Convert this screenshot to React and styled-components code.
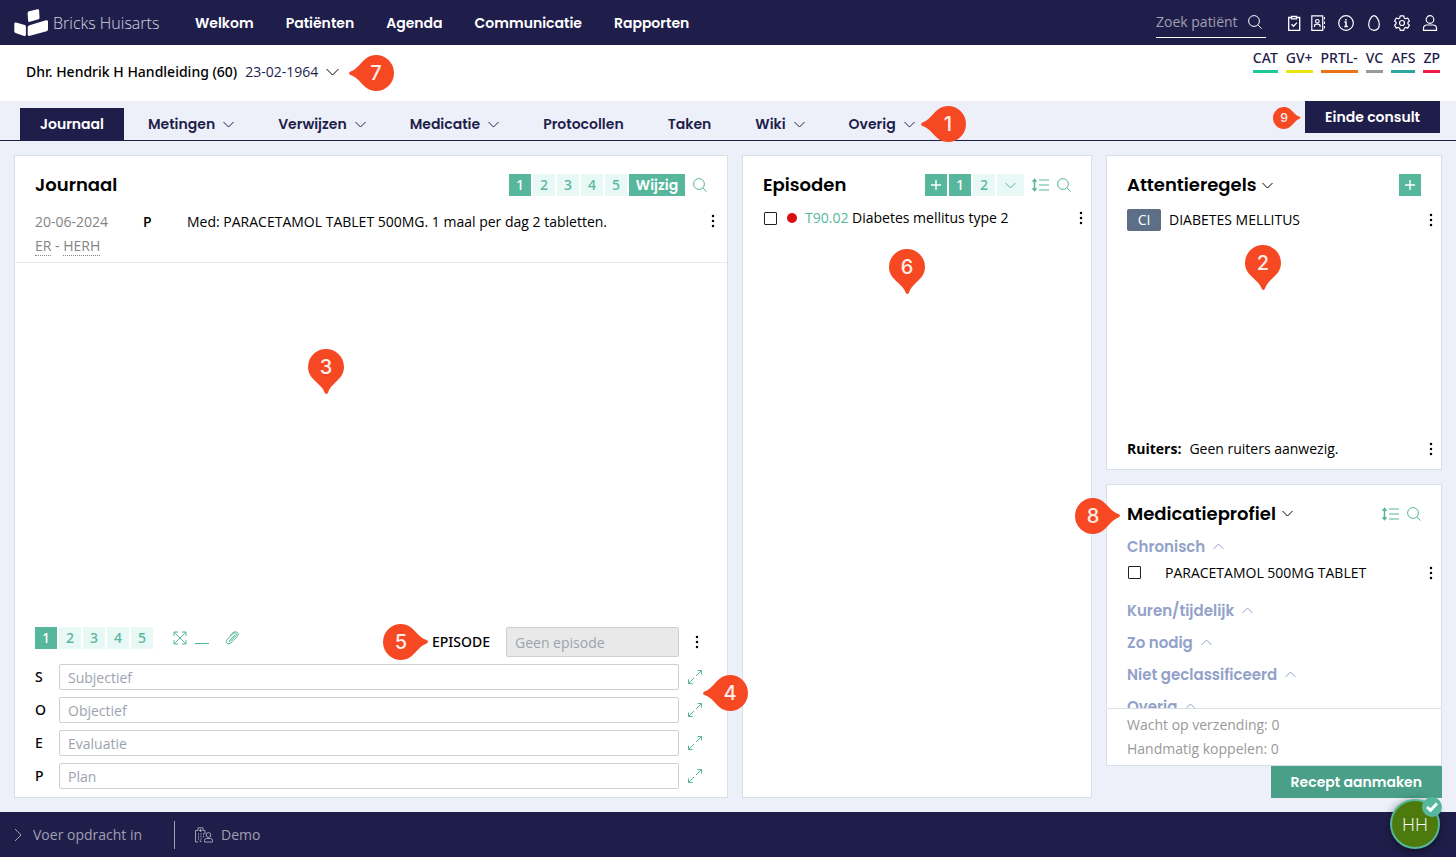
import React from 'react'
import styled, { createGlobalStyle } from 'styled-components'

const tabs = [
    { label: 'Metingen', menu: true },
    { label: 'Verwijzen', menu: true },
    { label: 'Medicatie', menu: true },
    { label: 'Protocollen' },
    { label: 'Taken' },
    { label: 'Wiki', menu: true },
    { label: 'Overig', menu: true, marker: '1' },
]

const labels = [
    { name: 'CAT', color: '#1bc998' },
    { name: 'GV+', color: '#ebe50f' },
    { name: 'PRTL-', color: '#ea7317' },
    { name: 'VC', color: '#999999' },
    { name: 'AFS', color: '#2fa5a0' },
    { name: 'ZP', color: '#ee1c47' },
]

const soep = [
    { key: 'S', name: 'Subjectief' },
    { key: 'O', name: 'Objectief' },
    { key: 'E', name: 'Evaluatie' },
    { key: 'P', name: 'Plan' },
]

/* Icons */
const Icon = ({ w = 16, h = 16, sw = 1, children }) => (
    <Svg width={w} height={h} viewBox={`0 0 ${w} ${h}`} strokeWidth={sw} aria-hidden="true">
        {children}
    </Svg>
)

const Chevron = ({ up }) => (
    <Icon w={11} h={7}>
        <path d={up ? 'M.5 6 5.5 1l5 5' : 'M.5 1l5 5 5-5'} />
    </Icon>
)

const SearchIcon = () => (
    <Icon w={14} h={14}>
        <circle cx="6" cy="6" r="5.4" />
        <path d="M10 10l3.6 3.6" />
    </Icon>
)

const SortIcon = () => (
    <Icon w={17} h={14}>
        <path d="M2.500 1.500v11M.5 3.800l2-2.300 2 2.300M.5 10.200l2 2.300 2-2.300" strokeWidth="1.500" />
        <path d="M7 2h10M7 7h10M7 12h10" strokeWidth="1.200" />
    </Icon>
)

const PlusIcon = () => (
    <Icon w={12} h={12} sw={1.4}>
        <path d="M6 1v10M1 6h10" />
    </Icon>
)

const DotsIcon = () => (
    <Icon w={4} h={14}>
        <g fill="#000" stroke="none">
            <circle cx="2" cy="2" r="1.25" />
            <circle cx="2" cy="7" r="1.25" />
            <circle cx="2" cy="12" r="1.25" />
        </g>
    </Icon>
)

const ExpandIcon = () => (
    <Icon w={14} h={14}>
        <path d="M9.5.5h4v4M13.5.5 8 6M4.5 13.5h-4v-4M.5 13.5 6 8" />
    </Icon>
)

const Logo = () => (
    <svg width="35" height="28" viewBox="0 0 35 28" fill="#fff" aria-hidden="true">
        <path d="M15 2.200 23.500.2q1.500-.3 1.600 1l.4 7.500q0 1.200-1 1.600L16 12.800q-1.700.5-1.900-1.100l-.5-7.600q0-1.500 1.400-1.900z" />
        <path d="M2 13.600l8.700 2.300q1.200.4 1.200 1.600v8q0 1.900-1.800 1.400l-8.600-2.800Q.3 23.600.3 22.300v-7.400q0-1.700 1.700-1.300z" />
        <path d="M15.500 16.200l16.500-4.900q1.800-.5 2 1.200v7.800q0 1.500-1.400 1.900l-16.700 4.600q-2.100.5-2.200-1.300v-7.200q.1-1.600 1.800-2.100z" />
    </svg>
)

/* Numbered pin, `point` is the side the tip is on */
const turns = { down: 0, left: 90, right: -90 }

const Pin = ({ n, point, size = 36 }) => (
    <svg width={size} height={size} viewBox="0 0 36 36" overflow="visible" aria-hidden="true">
        <path
            d="M18 0a18 18 0 0 1 18 18c0 7-4 11-8.500 15.200-3.500 3.300-6 6-7.500 10.300q-1.500 3-3.400 0c-1.500-4.300-4.600-7-8.100-10.300C4 29 0 25 0 18A18 18 0 0 1 18 0z"
            fill="#f54823"
            transform={`rotate(${turns[point]} 18 18)`}
        />
        <text x="18" y="25" textAnchor="middle" fontSize="20" fontWeight="500" fill="#fdeeea">{n}</text>
    </svg>
)

const Pager = ({ count }) => (
    <>
        {Array.from({ length: count }, (_, i) => (
            <PageBtn key={i} $active={i === 0}>{i + 1}</PageBtn>
        ))}
    </>
)

const TopBar = () => (
    <Header>
        <Brand href="#"><Logo />Bricks Huisarts</Brand>
        <MainNav>
            {['Welkom', 'Patiënten', 'Agenda', 'Communicatie', 'Rapporten'].map((item) => (
                <NavLink href="#" key={item}>{item}</NavLink>
            ))}
        </MainNav>
        <Search>
            <SearchInput placeholder="Zoek patiënt" aria-label="Zoek patiënt" />
            <SearchIcon />
        </Search>
        <Tools>
            <ToolPair>
                <IconBtn aria-label="Taken">
                    <Icon w={14} sw={1.3}>
                        <path d="M4 2.500H1.700v12.800h11V2.500H10M4.500 1.500h5v2.400h-5zM4.500 9.300l2 2L10 7.600" />
                    </Icon>
                </IconBtn>
                <IconBtn aria-label="Contacten">
                    <Icon w={14} sw={1.2}>
                        <path d="M.8.800h10.900v14.500H.8zM13.500 2v2.500M13.500 6.500V9M13.500 11v2.500M3.500 12v-1q0-1.800 2.800-1.800T9.100 11v1" />
                        <circle cx="6.300" cy="6.300" r="1.800" />
                    </Icon>
                </IconBtn>
            </ToolPair>
            <IconBtn aria-label="Informatie">
                <Icon sw={1.2}>
                    <circle cx="8" cy="8" r="7.300" />
                    <path d="M6.500 7H8v4.500M6.300 11.500h3.600M7.900 4v1.400" strokeWidth="1.500" />
                </Icon>
            </IconBtn>
            <IconBtn aria-label="Lab">
                <Icon sw={1.2}>
                    <path d="M8 .7c2.600 0 5.300 5 5.300 8.800 0 3.500-2 5.800-5.300 5.800s-5.300-2.300-5.300-5.800C2.700 5.700 5.400.7 8 .7z" />
                </Icon>
            </IconBtn>
            <IconBtn aria-label="Instellingen">
                <Icon sw={1.2}>
                    <path d="M6.200.8h3.600l.5 2.100 1.300.8 2.100-.7 1.700 3-1.500 1.400v1.300l1.500 1.400-1.700 3-2.100-.7-1.300.8-.5 2.100H6.200l-.5-2.100-1.300-.8-2.100.7-1.700-3 1.500-1.400V7.400L.6 6l1.700-3 2.100.7 1.300-.8z" strokeLinejoin="round" />
                    <circle cx="8" cy="8" r="2.500" />
                </Icon>
            </IconBtn>
            <IconBtn aria-label="Account">
                <Icon sw={1.2}>
                    <circle cx="8" cy="4.500" r="3.800" />
                    <path d="M1.500 15.300v-2q0-3.300 3.500-3.300h6q3.500 0 3.500 3.300v2z" />
                </Icon>
            </IconBtn>
        </Tools>
    </Header>
)

const PatientBar = () => (
    <Patient>
        <PatientBtn>
            <PatientName>Dhr. Hendrik H Handleiding (60)</PatientName>
            23-02-1964
            <Icon w={13} h={8}><path d="M.5 1l6 6 6-6" stroke="#000" /></Icon>
            <Marker $left="calc(100% + 19px)" $top="-5px"><Pin n="7" point="left" /></Marker>
        </PatientBtn>
        <Labels>
            {labels.map((l) => <Label key={l.name} $color={l.color}>{l.name}</Label>)}
        </Labels>
    </Patient>
)

const TabBar = () => (
    <Tabs>
        <Tab href="#" $active>Journaal</Tab>
        {tabs.map((t) => (
            <Tab href="#" key={t.label}>
                {t.label}
                {t.menu && <Chevron />}
                {t.marker && <Marker $left="calc(100% - 5px)" $top="-2px"><Pin n={t.marker} point="left" /></Marker>}
            </Tab>
        ))}
        <EndBtn>
            Einde consult
            <Marker $left="-32px" $top="6px"><Pin n="9" point="right" size={22} /></Marker>
        </EndBtn>
    </Tabs>
)

const Journaal = () => (
    <Panel>
        <PanelHead>
            <Title>Journaal</Title>
            <Group>
                <Pager count={5} />
                <EditBtn>Wijzig</EditBtn>
            </Group>
            <IconBtn aria-label="Zoeken" $green><SearchIcon /></IconBtn>
        </PanelHead>
        <Entry>
            <EntryMeta>
                20-06-2024<br />
                <Abbr>ER</Abbr> - <Abbr>HERH</Abbr>
            </EntryMeta>
            <EntryType>P</EntryType>
            <EntryText>Med: PARACETAMOL TABLET 500MG. 1 maal per dag 2 tabletten.</EntryText>
            <IconBtn aria-label="Meer"><DotsIcon /></IconBtn>
        </Entry>
        <Filler />
        <Composer>
            <ComposerHead>
                <Group><Pager count={5} /></Group>
                <ComposerTools>
                    <IconBtn aria-label="Vergroten" $green>
                        <Icon w={14} h={14}>
                            <path d="M1 5V1h4M9 1h4v4M13 9v4H9M5 13H1V9M1 1l12 12M13 1 1 13" />
                        </Icon>
                    </IconBtn>
                    <IconBtn aria-label="Verkleinen" $green>
                        <Icon w={14} h={14}><path d="M0 12.500h14" /></Icon>
                    </IconBtn>
                </ComposerTools>
                <IconBtn aria-label="Bijlage" $green>
                    <Icon w={14} h={14}>
                        <path d="M9.800 4.200 4.500 9.500q-.6 1.300.6 1.100l5.700-5.700q1.300-1.700 0-2.700-1.200-1-2.700.3L2.200 8.400q-1.800 2.200-.3 3.900 1.800 1.500 3.900-.3l6.300-6.300q2-2.600.2-4.300-2-1.600-4.400.3L5 4.500" />
                    </Icon>
                </IconBtn>
                <EpisodeLabel htmlFor="episode">
                    EPISODE
                    <Marker $left="-49px" $top="-6px"><Pin n="5" point="right" /></Marker>
                </EpisodeLabel>
                <EpisodeInput id="episode" placeholder="Geen episode" disabled />
                <IconBtn aria-label="Meer"><DotsIcon /></IconBtn>
            </ComposerHead>
            {soep.map((s) => (
                <SoepRow key={s.key}>
                    <SoepLabel htmlFor={`soep-${s.key}`}>{s.key}</SoepLabel>
                    <Input id={`soep-${s.key}`} placeholder={s.name} />
                    <IconBtn aria-label={`${s.name} vergroten`} $green><ExpandIcon /></IconBtn>
                </SoepRow>
            ))}
            <Marker $left="calc(100% - 15px)" $top="48px"><Pin n="4" point="left" /></Marker>
        </Composer>
        <Marker $left="293px" $top="193px"><Pin n="3" point="down" /></Marker>
    </Panel>
)

const Episoden = () => (
    <Panel>
        <PanelHead>
            <Title>Episoden</Title>
            <Group>
                <PageBtn $active aria-label="Toevoegen"><PlusIcon /></PageBtn>
                <Pager count={2} />
                <MoreBtn aria-label="Meer pagina's"><Chevron /></MoreBtn>
            </Group>
            <IconBtn aria-label="Sorteren" $green><SortIcon /></IconBtn>
            <IconBtn aria-label="Zoeken" $green><SearchIcon /></IconBtn>
        </PanelHead>
        <Episode>
            <Check type="checkbox" aria-label="Diabetes mellitus type 2" />
            <Dot />
            <EpisodeText><Code>T90.02</Code> Diabetes mellitus type 2</EpisodeText>
            <IconBtn aria-label="Meer"><DotsIcon /></IconBtn>
        </Episode>
        <Marker $left="146px" $top="93px"><Pin n="6" point="down" /></Marker>
    </Panel>
)

const Attentie = () => (
    <Panel $grow={19}>
        <PanelHead>
            <Title>Attentieregels <Chevron /></Title>
            <PageBtn $active aria-label="Toevoegen"><PlusIcon /></PageBtn>
        </PanelHead>
        <Alert>
            <Badge>CI</Badge>
            <AlertText>DIABETES MELLITUS</AlertText>
            <IconBtn aria-label="Meer"><DotsIcon /></IconBtn>
        </Alert>
        <Filler />
        <Alert $last>
            <strong>Ruiters:</strong>
            <AlertText>Geen ruiters aanwezig.</AlertText>
            <IconBtn aria-label="Meer"><DotsIcon /></IconBtn>
        </Alert>
        <Marker $left="138px" $top="89px"><Pin n="2" point="down" /></Marker>
    </Panel>
)

const Medicatie = () => (
    <Panel $grow={17}>
        <PanelHead>
            <Title>Medicatieprofiel <Chevron /></Title>
            <IconBtn aria-label="Sorteren" $green><SortIcon /></IconBtn>
            <IconBtn aria-label="Zoeken" $green><SearchIcon /></IconBtn>
        </PanelHead>
        <MedList>
            <MedGroup>Chronisch <Chevron up /></MedGroup>
            <MedRow>
                <Check type="checkbox" id="med-1" />
                <MedName htmlFor="med-1">PARACETAMOL 500MG TABLET</MedName>
                <IconBtn aria-label="Meer"><DotsIcon /></IconBtn>
            </MedRow>
            <MedGroup>Kuren/tijdelijk <Chevron up /></MedGroup>
            <MedGroup>Zo nodig <Chevron up /></MedGroup>
            <MedGroup>Niet geclassificeerd <Chevron up /></MedGroup>
            <MedGroup>Overig <Chevron up /></MedGroup>
        </MedList>
        <MedFoot>
            <div>Wacht op verzending: 0</div>
            <div>Handmatig koppelen: 0</div>
        </MedFoot>
        <Marker $left="-32px" $top="13px"><Pin n="8" point="right" /></Marker>
    </Panel>
)

const BottomBar = () => (
    <Footer>
        <Icon w={8} h={14}><path d="M1 1l6 6-6 6" /></Icon>
        <Command placeholder="Voer opdracht in" aria-label="Voer opdracht in" />
        <Practice>
            <Icon w={18} h={16}>
                <path d="M.5 15V3.500H3V.8h5v2.700h2V7M.5 15H3M5.500 2v3M4 3.500h3" />
                <path d="M3 7h1M5.500 7h1M8 7h1M3 9.500h1M5.500 9.500h1M8 9.500h1M3 12h1M5.500 12h1M5.500 15v-1.500" strokeWidth="1.500" />
                <circle cx="13.500" cy="8" r="2.400" />
                <path d="M9.500 15v-1.500q0-2 2-2h4q2 0 2 2V15z" />
            </Icon>
            Demo
        </Practice>
        <Avatar aria-label="Gebruiker HH">
            HH
            <Online>
                <Icon w={12} h={10} sw={3}><path d="M1 5l3.500 3.300L11 1.500" /></Icon>
            </Online>
        </Avatar>
    </Footer>
)

const App = () => {
    return (
        <Page>
            <GlobalStyle />
            <TopBar />
            <PatientBar />
            <TabBar />
            <Columns>
                <Journaal />
                <Episoden />
                <Side>
                    <Attentie />
                    <Gap />
                    <Medicatie />
                    <RecipeBtn>Recept aanmaken</RecipeBtn>
                </Side>
            </Columns>
            <BottomBar />
        </Page>
    )
}

export default App

const heading = `font-family: Poppins, Inter, sans-serif; font-weight: 600;`
const medium = `font-family: "Noto Sans", "Open Sans", sans-serif; font-weight: 500;`

const GlobalStyle = createGlobalStyle`
* {
    box-sizing: border-box;
}
body {
    margin: 0;
    background: #edf0f9;
    color: #000;
    font: 14px/24px "Open Sans", "Noto Sans", sans-serif;
}
button, input {
    font: inherit;
    color: inherit;
}
button {
    border: 0;
    padding: 0;
    background: none;
    cursor: pointer;
}
a {
    text-decoration: none;
}
`

const Svg = styled.svg`
display: block;
flex: none;
fill: none;
stroke: currentColor;
`

const Page = styled.div`
min-height: 100vh;
display: flex;
flex-direction: column;
`

const Marker = styled.span`
position: absolute;
z-index: 2;
left: ${(p) => p.$left};
top: ${(p) => p.$top};
line-height: 0;
font-family: Inter, sans-serif;
pointer-events: none;
`

const Header = styled.header`
height: 45px;
display: flex;
align-items: center;
padding: 0 18px 0 14px;
background: #1f1e4b;
color: #fff;
`

const Brand = styled.a`
display: flex;
align-items: center;
gap: 4px;
width: 181px;
color: #d5d5e0;
font-size: 16px;
font-weight: 300;
white-space: nowrap;
`

const MainNav = styled.nav`
display: flex;
gap: 32px;
`

const NavLink = styled.a`
${heading}
color: #fff;
`

const Search = styled.div`
display: flex;
align-items: center;
width: 110px;
height: 30px;
margin-left: auto;
padding-right: 4px;
border-bottom: 1px solid #fff;
`

const SearchInput = styled.input`
flex: 1;
min-width: 0;
padding: 0;
border: 0;
outline: 0;
background: none;
&::placeholder {
    color: #a09fb0;
}
`

const Tools = styled.div`
display: flex;
gap: 12px;
margin-left: 21px;
`

const ToolPair = styled.div`
display: flex;
gap: 10px;
padding-right: 1px;
`

const IconBtn = styled.button`
display: flex;
align-items: center;
justify-content: center;
color: ${(p) => (p.$green ? '#56b79c' : 'inherit')};
`

const Patient = styled.div`
height: 56px;
display: flex;
align-items: flex-start;
justify-content: space-between;
padding: 0 16px 0 26px;
background: #fff;
color: #1f1e4b;
`

const PatientBtn = styled.button`
position: relative;
display: flex;
align-items: center;
gap: 8px;
margin-top: 15px;
`

const PatientName = styled.span`
${medium}
color: #000;
`

const Labels = styled.div`
display: flex;
gap: 8px;
`

const Label = styled.span`
${medium}
height: 28px;
line-height: 26px;
border-bottom: 3px solid ${(p) => p.$color};
`

const Tabs = styled.nav`
height: 40px;
display: flex;
align-items: flex-end;
gap: 4px;
padding: 0 16px 0 20px;
border-bottom: 1px solid #1f1e4b;
`

const Tab = styled.a`
${heading}
position: relative;
height: 32px;
display: flex;
align-items: center;
gap: 8px;
padding: 0 20px;
background: ${(p) => (p.$active ? '#1f1e4b' : 'none')};
color: ${(p) => (p.$active ? '#fff' : '#1f1e4b')};
`

const EndBtn = styled.button`
${heading}
position: relative;
align-self: flex-start;
height: 32px;
margin-left: auto;
padding: 0 20px;
background: #1f1e4b;
color: #fff;
`

const Columns = styled.main`
flex: 1;
display: grid;
grid-template-columns: 51fr 25fr 24fr;
gap: 14px;
padding: 14px;
`

const Panel = styled.section`
position: relative;
display: flex;
flex-direction: column;
flex: ${(p) => p.$grow || 1} 1 0;
min-width: 0;
min-height: 0;
background: #fff;
border: 1px solid #dbdfea;
`

const PanelHead = styled.div`
display: flex;
align-items: center;
gap: 8px;
padding: 18px 20px 0;
`

const Title = styled.h2`
${heading}
display: flex;
align-items: center;
gap: 6px;
margin: 0 auto 0 0;
font-size: 18px;
line-height: 22px;
`

const Group = styled.div`
display: flex;
gap: 2px;
`

const PageBtn = styled.button`
${medium}
width: 22px;
height: 22px;
display: flex;
align-items: center;
justify-content: center;
background: ${(p) => (p.$active ? '#56b79c' : '#e8f9f5')};
color: ${(p) => (p.$active ? '#fff' : '#56b79c')};
`

const MoreBtn = styled(PageBtn)`
width: 27px;
`

const EditBtn = styled(PageBtn)`
${heading}
width: 56px;
background: #56b79c;
color: #fff;
`

const Filler = styled.div`
flex: 1;
`

const Entry = styled.article`
display: flex;
align-items: flex-start;
margin-top: 14px;
padding: 0 12px 4px 20px;
border-bottom: 1px solid #e9e9ee;
& > button {
    height: 22px;
}
`

const EntryMeta = styled.div`
width: 108px;
color: #848484;
`

const Abbr = styled.span`
border-bottom: 1px dotted #848484;
`

const EntryType = styled.div`
width: 44px;
font-weight: 600;
`

const EntryText = styled.div`
flex: 1;
`

const Composer = styled.div`
position: relative;
display: flex;
flex-direction: column;
gap: 7px;
padding: 0 0 8px 20px;
`

const ComposerHead = styled.div`
display: flex;
align-items: flex-start;
padding-right: 28px;
& > button {
    height: 22px;
}
& > button:last-child {
    height: 30px;
    margin-left: 16px;
}
`

const ComposerTools = styled.div`
display: flex;
gap: 8px;
height: 22px;
margin: 0 16px 0 20px;
`

const EpisodeLabel = styled.label`
${medium}
position: relative;
margin: 3px 16px 0 auto;
`

const Input = styled.input`
min-width: 0;
height: 26px;
padding: 0 8px;
border: 1px solid #cdced8;
border-radius: 2px;
background: #fff;
&::placeholder {
    color: #9ca3b0;
}
`

const EpisodeInput = styled(Input)`
width: 173px;
height: 30px;
background: #e9e9e9;
`

const SoepRow = styled.div`
display: grid;
grid-template-columns: 24px 1fr 32px 16px;
align-items: center;
`

const SoepLabel = styled.label`
${medium}
`

const Episode = styled.div`
display: flex;
align-items: center;
margin-top: 10px;
padding: 0 8px 0 20px;
`

const Check = styled.input`
appearance: none;
width: 13px;
height: 13px;
margin: 0 1px 0 1px;
border: 1px solid #222;
border-radius: 1px;
background: #fff;
&:checked {
    background: #56b79c;
}
`

const Dot = styled.span`
width: 10px;
height: 10px;
margin: 0 8px 0 9px;
border-radius: 50%;
background: #d90f0f;
`

const EpisodeText = styled.div`
flex: 1;
`

const Code = styled.span`
color: #56b79c;
`

const Side = styled.div`
display: flex;
flex-direction: column;
`

const Gap = styled.div`
height: 14px;
`

const Alert = styled.div`
display: flex;
align-items: center;
gap: 8px;
padding: 0 8px 0 20px;
margin: ${(p) => (p.$last ? '0 0 8px' : '12px 0 0')};
`

const Badge = styled.span`
width: 34px;
height: 22px;
line-height: 22px;
border-radius: 2px;
background: #5c6f87;
color: #fff;
text-align: center;
`

const AlertText = styled.div`
flex: 1;
`

const MedList = styled.div`
flex: 1 1 0;
min-height: 0;
margin-top: 6px;
overflow: hidden;
`

const MedGroup = styled.h3`
${heading}
height: 32px;
display: flex;
align-items: center;
gap: 8px;
margin: 0;
padding: 0 20px;
color: #92a2c8;
font-size: 15px;
`

const MedRow = styled.div`
display: flex;
align-items: center;
height: 20px;
margin-bottom: 12px;
padding: 0 8px 0 20px;
`

const MedName = styled.label`
flex: 1;
margin-left: 23px;
`

const MedFoot = styled.div`
padding: 4px 20px;
border-top: 1px solid #dbdfea;
color: #999;
`

const RecipeBtn = styled.button`
${heading}
align-self: flex-end;
height: 32px;
padding: 0 20px;
background: #4a9f88;
color: #fff;
`

const Footer = styled.footer`
position: relative;
height: 45px;
display: flex;
align-items: center;
padding: 0 14px;
background: #1f1e4b;
color: #a09fb0;
`

const Command = styled.input`
width: 141px;
margin-left: 11px;
padding: 0;
border: 0;
outline: 0;
background: none;
&::placeholder {
    color: #a09fb0;
}
`

const Practice = styled.div`
display: flex;
align-items: center;
gap: 8px;
height: 28px;
padding-left: 20px;
border-left: 1px solid #a09fb0;
`

const Avatar = styled.button`
position: absolute;
right: 16px;
top: -13px;
width: 50px;
height: 50px;
border: 2px solid #56b79c;
border-radius: 50%;
background: #4c7a0d;
color: #fff;
font-size: 18px;
font-weight: 300;
box-shadow: 0 2px 10px rgba(0, 0, 0, 0.5);
`

const Online = styled.span`
position: absolute;
right: -4px;
top: -4px;
width: 20px;
height: 20px;
display: flex;
align-items: center;
justify-content: center;
border-radius: 50%;
background: #56b79c;
`
